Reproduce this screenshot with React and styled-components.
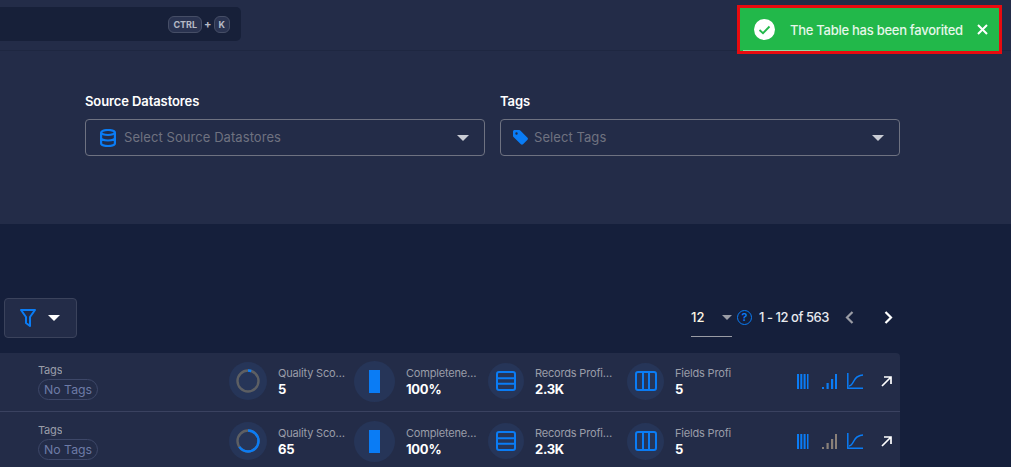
import styled, { createGlobalStyle } from "styled-components";

const GlobalStyle = createGlobalStyle`
    html, body {
        margin: 0;
        padding: 0;
        height: 467px;
        overflow: hidden;
        background: #151f3b;
        font-family: "Inter", "Noto Sans", sans-serif;
    }
`;

const Caret = ({ color = "#c9ccd4", w = 12 }) => (
    <svg width={w} height={w / 2} viewBox="0 0 12 6"><path d="M0 0h12L6 6z" fill={color} /></svg>
);

const DbIcon = () => (
    <svg width="16" height="18" viewBox="0 0 16 18" fill="none" stroke="#0a7cf5" strokeWidth="2.200">
        <ellipse cx="8" cy="3.500" rx="6.900" ry="2.500" />
        <path d="M1.100 3.500v11c0 1.400 3.100 2.500 6.900 2.500s6.900-1.100 6.900-2.500v-11M1.100 9c0 1.400 3.100 2.500 6.900 2.500s6.900-1.100 6.900-2.500" />
    </svg>
);

const TagIcon = () => (
    <svg width="15" height="15" viewBox="0 0 15 15">
        <path d="M0 1.500C0 .7.700 0 1.500 0h4.700c.4 0 .8.200 1.100.5l7.200 7.200c.6.600.6 1.500 0 2.100l-4.500 4.500c-.6.600-1.500.6-2.100 0L.5 7.100C.2 6.800 0 6.400 0 6zM3.500 2.300a1.200 1.200 0 1 0 0 2.400 1.200 1.200 0 0 0 0-2.400z" fill="#0a7cf5" />
    </svg>
);

const FilterIcon = () => (
    <svg width="16" height="18" viewBox="0 0 16 18" fill="none" stroke="#0a7cf5" strokeWidth="2" strokeLinejoin="round">
        <path d="M1 1h14L10 8v9l-4-3V8z" />
    </svg>
);

const Ring = ({ value }) => {
    const c = 2 * Math.PI * 10.500;
    return (
        <svg width="24" height="24" viewBox="0 0 24 24" fill="none" strokeWidth="2.400">
            <circle cx="12" cy="12" r="10.500" stroke="#5d5f63" />
            <circle cx="12" cy="12" r="10.500" stroke="#0a7cf5" strokeDasharray={`${c * value / 100} ${c}`} transform="rotate(-90 12 12)" />
        </svg>
    );
};

const RowsIcon = () => (
    <svg width="20" height="20" viewBox="0 0 20 20" fill="none" stroke="#0a7cf5" strokeWidth="2">
        <rect x="1" y="1" width="18" height="18" rx="2" />
        <path d="M1 7.300h18M1 12.700h18" />
    </svg>
);

const ColumnsIcon = () => (
    <svg width="22" height="20" viewBox="0 0 22 20" fill="none" stroke="#0a7cf5" strokeWidth="2">
        <rect x="1" y="1" width="20" height="18" rx="2" />
        <path d="M8 1v18M14 1v18" />
    </svg>
);

const StripesIcon = () => (
    <svg width="12" height="15" viewBox="0 0 12 15" fill="#0a7cf5">
        <path d="M0 0h2v15H0zM3.300 0h2v15h-2zM6.600 0h2v15h-2zM10 0h1.500v15H10z" />
    </svg>
);

const BarsIcon = ({ color }) => (
    <svg width="15" height="15" viewBox="0 0 15 15" fill={color}>
        <path d="M0 13h2v2H0zM4.500 9h2.200v6H4.500zM9 5h2.200v10H9zM13 0h2v15h-2z" />
    </svg>
);

const CurveIcon = () => (
    <svg width="16" height="16" viewBox="0 0 16 16" fill="none" stroke="#0a7cf5" strokeWidth="1.500">
        <path d="M.8 0v15.200H16M2 13c4 0 4.500-7 8-9 2-1.200 4-2 6-2" />
    </svg>
);

const ArrowIcon = () => (
    <svg width="11" height="11" viewBox="0 0 11 11" fill="none" stroke="#fff" strokeWidth="1.700">
        <path d="M1 10 10 1M3 1h7v7" />
    </svg>
);

const Chevron = ({ dir, color }) => (
    <svg width="9" height="13" viewBox="0 0 9 13" fill="none" stroke={color} strokeWidth="2.200">
        <path d={dir === "left" ? "M7.500 1 2 6.500 7.500 12" : "M1.500 1 7 6.500 1.500 12"} />
    </svg>
);

const rows = [
    { score: "5", ring: 5, signal: "#0a7cf5" },
    { score: "65", ring: 65, signal: "#8a8078" },
];

const App = () => {
    return <>
        <GlobalStyle />
        <Page>
            <TopBar>
                <SearchBox>
                    <Key>CTRL</Key>
                    <Plus>+</Plus>
                    <Key>K</Key>
                </SearchBox>
            </TopBar>
            <Toast>
                <svg width="21" height="21" viewBox="0 0 21 21">
                    <circle cx="10.500" cy="10.500" r="10.500" fill="#fff" />
                    <path d="M5.500 11l3.500 3.200 6.500-6.700" fill="none" stroke="#22b84a" strokeWidth="1.800" />
                </svg>
                <ToastText>The Table has been favorited</ToastText>
                <svg width="11" height="11" viewBox="0 0 11 11" stroke="#fff" strokeWidth="2">
                    <path d="M1 1l9 9M10 1l-9 9" />
                </svg>
                <ToastProgress />
            </Toast>
            <FilterPanel>
                <Field>
                    <FieldLabel>Source Datastores</FieldLabel>
                    <Select>
                        <DbIcon />
                        <Placeholder>Select Source Datastores</Placeholder>
                        <Caret />
                    </Select>
                </Field>
                <Field>
                    <FieldLabel>Tags</FieldLabel>
                    <Select $tight>
                        <TagIcon />
                        <Placeholder>Select Tags</Placeholder>
                        <Caret />
                    </Select>
                </Field>
            </FilterPanel>
            <Toolbar>
                <FilterButton>
                    <FilterIcon />
                    <Caret color="#fff" />
                </FilterButton>
                <Pagination>
                    <PageSize>
                        <span>12</span>
                        <Caret color="#9a9ca5" w={10} />
                    </PageSize>
                    <HelpIcon>?</HelpIcon>
                    <PageRange>1 - 12 of 563</PageRange>
                    <PageNav>
                        <Chevron dir="left" color="#9a9ca5" />
                        <Chevron dir="right" color="#fff" />
                    </PageNav>
                </Pagination>
            </Toolbar>
            <Table>
                {rows.map((r, i) => (
                    <Row key={i}>
                        <TagsCell>
                            <StatLabel>Tags</StatLabel>
                            <TagPill>No Tags</TagPill>
                        </TagsCell>
                        <Stat $width={125}>
                            <IconDisc $size={38}><Ring value={r.ring} /></IconDisc>
                            <StatText $width={67}>
                                <StatLabel>Quality Score</StatLabel>
                                <StatValue>{r.score}</StatValue>
                            </StatText>
                        </Stat>
                        <Stat $width={134}>
                            <IconDisc $size={41}><SolidBar /></IconDisc>
                            <StatText $width={72}>
                                <StatLabel>Completeness</StatLabel>
                                <StatValue>100%</StatValue>
                            </StatText>
                        </Stat>
                        <Stat $width={139}>
                            <IconDisc $size={36}><RowsIcon /></IconDisc>
                            <StatText $width={79}>
                                <StatLabel>Records Profiled</StatLabel>
                                <StatValue>2.3K</StatValue>
                            </StatText>
                        </Stat>
                        <Stat $width={170}>
                            <IconDisc $size={37}><ColumnsIcon /></IconDisc>
                            <StatText $width={56}>
                                <StatLabel $clip>Fields Profiled</StatLabel>
                                <StatValue>5</StatValue>
                            </StatText>
                        </Stat>
                        <Actions>
                            <StripesIcon />
                            <ActionSlot $gap={13}><BarsIcon color={r.signal} /></ActionSlot>
                            <ActionSlot $gap={10}><CurveIcon /></ActionSlot>
                            <ActionSlot $gap={18}><ArrowIcon /></ActionSlot>
                        </Actions>
                    </Row>
                ))}
            </Table>
        </Page>
    </>;
};

export default App;

const Page = styled.div`
    position: relative;
    width: 1011px;
    height: 467px;
    overflow: hidden;
    background: #151f3b;
`;

const TopBar = styled.div`
    height: 51px;
    background: #232c48;
    border-bottom: 1px solid #1e2741;
    display: flex;
    align-items: flex-start;
    padding-top: 7px;
    box-sizing: border-box;
`;

const SearchBox = styled.div`
    width: 241px;
    height: 34px;
    box-sizing: border-box;
    background: #172039;
    border-radius: 0 5px 5px 0;
    display: flex;
    align-items: center;
    justify-content: flex-end;
    gap: 2px;
    padding-right: 11px;
`;

const Key = styled.span`
    height: 17px;
    box-sizing: border-box;
    padding: 0 4px;
    border: 1px solid #464e66;
    border-radius: 6px;
    background: #2a3350;
    color: #b6bac6;
    font-size: 9px;
    font-weight: 700;
    line-height: 15px;
`;

const Plus = styled.span`
    color: #b6bac6;
    font-size: 11px;
    font-weight: 700;
`;

const Toast = styled.div`
    position: absolute;
    top: 5px;
    left: 737px;
    width: 265px;
    height: 49px;
    box-sizing: border-box;
    border: 3px solid #e80b0f;
    background: #22b84a;
    display: flex;
    align-items: center;
    padding: 0 11px 0 14px;
    svg { flex: none; }
`;

const ToastText = styled.span`
    flex: 1;
    margin-left: 15px;
    color: #e6f7ea;
    font-size: 13px;
    font-weight: 500;
    letter-spacing: -0.27px;
    white-space: nowrap;
`;

const ToastProgress = styled.div`
    position: absolute;
    left: 3px;
    bottom: 0;
    width: 77px;
    height: 1px;
    background: #8fdba4;
`;

const FilterPanel = styled.div`
    height: 173px;
    box-sizing: border-box;
    background: #232c48;
    padding: 42px 111px 0 85px;
    display: grid;
    grid-template-columns: 400px 400px;
    column-gap: 15px;
    align-items: start;
`;

const Field = styled.div`
    display: flex;
    flex-direction: column;
    gap: 9px;
`;

const FieldLabel = styled.label`
    color: #fff;
    font-size: 13px;
    font-weight: 600;
    line-height: 17px;
    letter-spacing: -0.1px;
`;

const Select = styled.div`
    height: 37px;
    box-sizing: border-box;
    border: 1px solid #6e7281;
    border-radius: 4px;
    display: flex;
    align-items: center;
    gap: ${p => (p.$tight ? "6px" : "8px")};
    padding: 0 15px 0 ${p => (p.$tight ? "12px" : "14px")};
`;

const Placeholder = styled.span`
    flex: 1;
    margin-top: -2px;
    color: #6f7280;
    font-size: 13px;
    font-weight: 400;
    letter-spacing: 0.07px;
`;

const Toolbar = styled.div`
    width: 900px;
    height: 129px;
    box-sizing: border-box;
    padding: 74px 7px 0 4px;
    display: flex;
    justify-content: space-between;
    align-items: flex-start;
`;

const FilterButton = styled.div`
    width: 73px;
    height: 40px;
    box-sizing: border-box;
    background: #232c48;
    border: 1px solid #3b435c;
    border-radius: 4px;
    display: flex;
    align-items: center;
    gap: 12px;
    padding-left: 15px;
`;

const Pagination = styled.div`
    display: flex;
    align-items: center;
    height: 38px;
    color: #e8eaef;
    font-size: 13px;
    font-weight: 500;
`;

const PageSize = styled.div`
    width: 41px;
    height: 39px;
    margin-top: 1px;
    box-sizing: border-box;
    border-bottom: 1px solid #9a9ca5;
    display: flex;
    align-items: center;
    justify-content: space-between;
    color: #fdf6e3;
`;

const HelpIcon = styled.span`
    width: 13px;
    height: 13px;
    margin-left: 5px;
    border: 1.500px solid #0a7cf5;
    border-radius: 50%;
    color: #0a7cf5;
    font-size: 11px;
    font-weight: 600;
    line-height: 13px;
    text-align: center;
`;

const PageRange = styled.span`
    margin-left: 7px;
    letter-spacing: -0.45px;
`;

const PageNav = styled.div`
    display: flex;
    align-items: center;
    gap: 30px;
    margin-left: 16px;
`;

const Table = styled.div`
    width: 900px;
    display: flex;
    flex-direction: column;
`;

const Row = styled.div`
    height: 59px;
    box-sizing: border-box;
    background: #232c48;
    border-bottom: 1px solid #3a4260;
    display: flex;
    align-items: center;
    &:first-child {
        border-radius: 0 4px 0 0;
        padding-bottom: 2px;
    }
`;

const TagsCell = styled.div`
    width: 229px;
    flex: none;
    box-sizing: border-box;
    padding-left: 38px;
    display: flex;
    flex-direction: column;
    align-items: flex-start;
    gap: 2px;
`;

const TagPill = styled.span`
    height: 21px;
    box-sizing: border-box;
    padding: 0 5px;
    border: 1px solid #3d4768;
    border-radius: 11px;
    color: #6d7ba6;
    font-size: 12.300px;
    line-height: 19px;
`;

const Stat = styled.div`
    width: ${p => p.$width}px;
    flex: none;
    display: flex;
    align-items: center;
`;

const IconDisc = styled.div`
    width: ${p => p.$size}px;
    height: ${p => p.$size}px;
    flex: none;
    border-radius: 50%;
    background: #263558;
    display: flex;
    align-items: center;
    justify-content: center;
`;

const SolidBar = styled.div`
    width: 11px;
    height: 23px;
    background: #0a7cf5;
`;

const StatText = styled.div`
    width: ${p => p.$width}px;
    margin-left: 11px;
    display: flex;
    flex-direction: column;
    gap: 1px;
`;

const StatLabel = styled.span`
    color: #9a9da8;
    font-size: 11px;
    line-height: 14px;
    letter-spacing: -0.18px;
    white-space: nowrap;
    overflow: hidden;
    text-overflow: ${p => (p.$clip ? "clip" : "ellipsis")};
`;

const StatValue = styled.span`
    color: #fff;
    font-size: 13px;
    font-weight: 700;
    line-height: 16px;
    letter-spacing: -0.25px;
`;

const Actions = styled.div`
    display: flex;
    align-items: center;
`;

const ActionSlot = styled.span`
    display: flex;
    margin-left: ${p => p.$gap}px;
`;
